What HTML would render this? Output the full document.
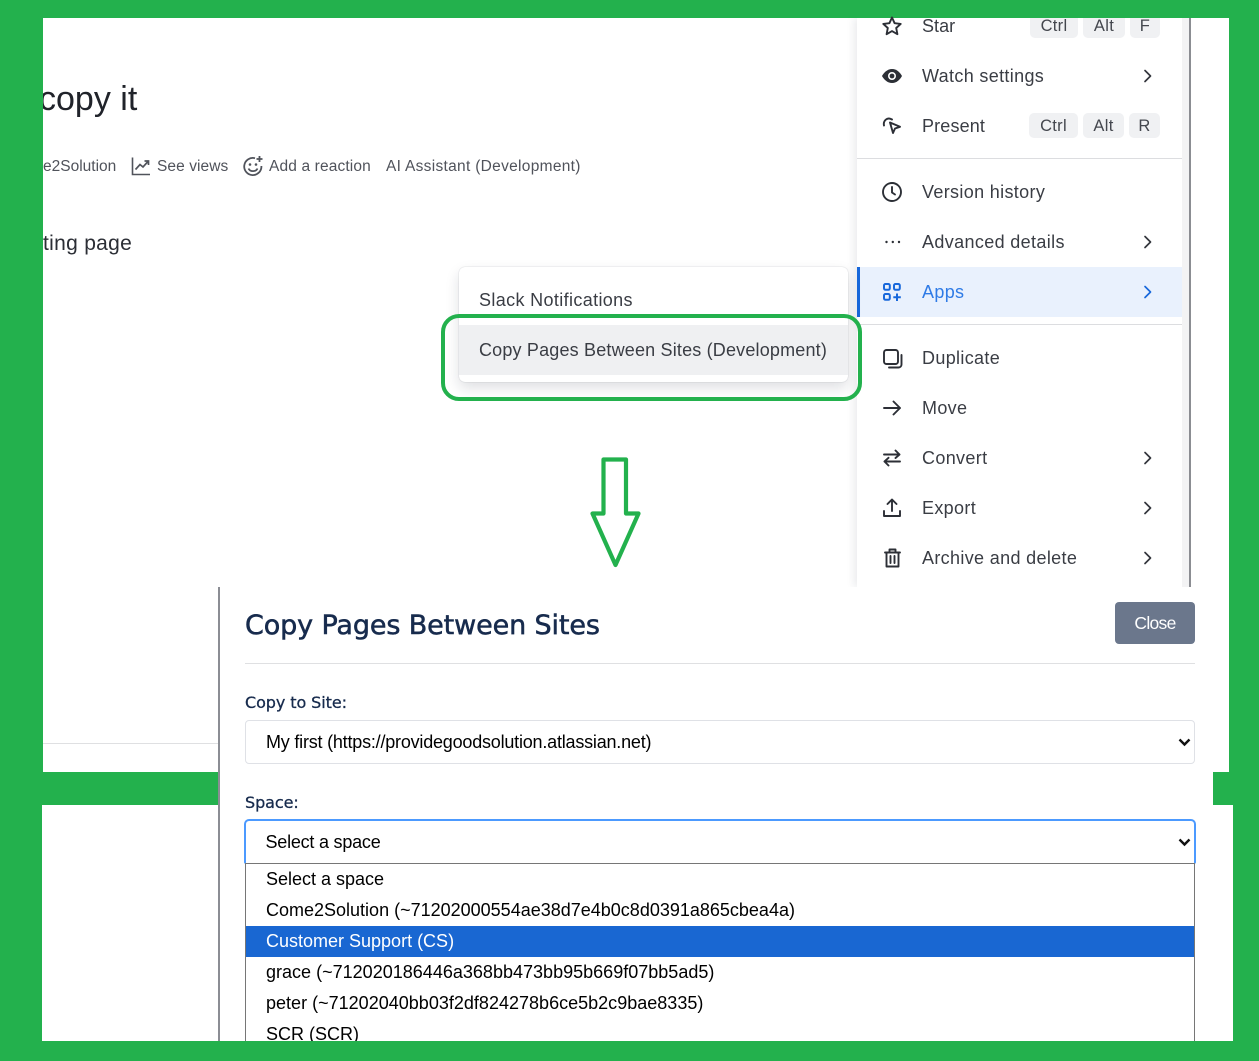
<!DOCTYPE html>
<html><head><meta charset="utf-8"><style>
html,body{margin:0;padding:0}
body{width:1259px;height:1061px;position:relative;overflow:hidden;background:#23b14d;font-family:"Liberation Sans",sans-serif}
div,span{position:absolute;white-space:nowrap}
svg{position:absolute;overflow:visible}
.m{left:922px;font-size:18px;line-height:24px;color:#3a3d44;letter-spacing:.34px}
.k{height:25px;line-height:27px;background:#f0f1f3;border-radius:5px;color:#44474e;font-size:16.5px;text-align:center;letter-spacing:.3px}
.o{left:266px;font-size:18px;line-height:31px;color:#000;letter-spacing:0}
.ic path,.ic circle,.ic rect{fill:none;stroke:#2c2f36;stroke-width:1.9;stroke-linecap:round;stroke-linejoin:round}
.ch{fill:none;stroke:#33363d;stroke-width:1.7;stroke-linecap:round;stroke-linejoin:round}
.sel{left:245px;width:950px;height:44px;box-sizing:border-box;background:#fff}
.t{font-size:18px;color:#000;line-height:44px;left:21px}
.l{font-family:'DejaVu Sans',sans-serif;font-size:16px;line-height:22px;color:#172b4d;letter-spacing:-.08px;-webkit-text-stroke:.3px #172b4d}
</style></head><body>

<div style="left:43px;top:18px;width:1186px;height:754px;background:#fff"></div>
<div style="left:42px;top:805px;width:1191px;height:236px;background:#fff"></div>

<div style="left:43px;top:18px;width:814px;height:569px;overflow:hidden">
<div style="left:-4px;top:58px;font-size:34px;line-height:46px;color:#20232a">copy it</div>
<div style="left:0;top:139px;font-size:15.5px;line-height:20px;color:#50535b">e2Solution</div>
<div style="left:114px;top:139px;font-size:15.5px;line-height:20px;color:#50535b;letter-spacing:.08px">See views</div>
<div style="left:226px;top:139px;font-size:15.5px;line-height:20px;color:#50535b;letter-spacing:.14px">Add a reaction</div>
<div style="left:343px;top:139px;font-size:15.5px;line-height:20px;color:#50535b;letter-spacing:.3px">AI Assistant (Development)</div>
<div style="left:0;top:213px;font-size:21px;line-height:26px;color:#2b2e35;letter-spacing:.3px">ting page</div>
</div>

<svg style="left:131px;top:156px" width="20" height="20" viewBox="0 0 20 20"><path d="M1.5 1.5V18.5H19" fill="none" stroke="#50535b" stroke-width="1.6"/><path d="M4.5 13.5L9 8.5L12 11L17 5.5M13.5 5H17.5V9" fill="none" stroke="#50535b" stroke-width="1.7"/></svg>
<svg style="left:242px;top:155px" width="22" height="22" viewBox="0 0 22 22"><path d="M13 3.2A8.6 8.6 0 1 0 19.4 11" fill="none" stroke="#50535b" stroke-width="1.8"/><circle cx="8" cy="9.5" r="1.3" fill="#50535b"/><circle cx="14" cy="9.5" r="1.3" fill="#50535b"/><path d="M6.5 13.5C8 17 14 17 15.5 13.5" fill="none" stroke="#50535b" stroke-width="1.7"/><path d="M17.5 1V7M14.5 4H20.5" stroke="#50535b" stroke-width="1.8"/></svg>

<!-- Menu -->
<div style="left:857px;top:18px;width:325px;height:569px;background:#fff;box-shadow:-3px 0 8px rgba(20,30,50,.09)"></div>
<div style="left:1182px;top:18px;width:7px;height:569px;background:#f3f3f4"></div>
<div style="left:1189px;top:18px;width:2px;height:569px;background:#8b8d92"></div>

<div style="left:857px;top:158px;width:325px;height:1px;background:#dcdde0"></div>
<div style="left:857px;top:324px;width:325px;height:1px;background:#dcdde0"></div>
<div style="left:857px;top:267px;width:325px;height:50px;background:#e9f1fd"></div>
<div style="left:857px;top:267px;width:3px;height:50px;background:#1868db"></div>

<div style="left:850px;top:0;width:409px;height:18px;background:#23b14d"></div>

<div class="m" style="top:14px;clip-path:inset(4px 0 0 0);letter-spacing:.05px">Star</div>
<div class="k" style="left:1030px;top:13px;width:48px;clip-path:inset(5px 0 0 0)">Ctrl</div>
<div class="k" style="left:1083px;top:13px;width:42px;clip-path:inset(5px 0 0 0)">Alt</div>
<div class="k" style="left:1130px;top:13px;width:30px;clip-path:inset(5px 0 0 0)">F</div>
<div class="m" style="top:64px">Watch settings</div>
<div class="m" style="top:114px;letter-spacing:.15px">Present</div>
<div class="k" style="left:1029px;top:113px;width:49px">Ctrl</div>
<div class="k" style="left:1083px;top:113px;width:41px">Alt</div>
<div class="k" style="left:1129px;top:113px;width:31px">R</div>
<div class="m" style="top:180px">Version history</div>
<div class="m" style="top:230px;letter-spacing:.36px">Advanced details</div>
<div class="m" style="top:280px;color:#2f7be6">Apps</div>
<div class="m" style="top:346px">Duplicate</div>
<div class="m" style="top:396px">Move</div>
<div class="m" style="top:446px">Convert</div>
<div class="m" style="top:496px">Export</div>
<div class="m" style="top:546px">Archive and delete</div>

<svg class="ic" style="left:882px;top:16px" width="20" height="20" viewBox="0 0 20 20"><path d="M10 1.5L12.6 7.2L18.7 7.9L14.2 12L15.4 18.2L10 15.1L4.6 18.2L5.8 12L1.3 7.9L7.4 7.2Z"/></svg>
<svg style="left:882px;top:69px" width="20" height="14" viewBox="0 0 20 14"><path d="M10 0C5 0 1.6 4 0 7C1.6 10 5 14 10 14C15 14 18.4 10 20 7C18.4 4 15 0 10 0Z" fill="#2c2f36"/><circle cx="10" cy="7" r="4" fill="#fff"/><circle cx="10" cy="7" r="2.4" fill="#2c2f36"/></svg>
<svg class="ic" style="left:882px;top:116px" width="20" height="20" viewBox="0 0 20 20"><path d="M8 6.5L18 10.8L13 12.5L11 17Z"/><path d="M2 9.5C1 5 5 .5 10 3.5"/></svg>
<svg class="ic" style="left:882px;top:182px" width="20" height="20" viewBox="0 0 20 20"><circle cx="10" cy="10" r="9"/><path d="M10 5V10.5L13 12.5"/></svg>
<svg style="left:885px;top:240px" width="16" height="4" viewBox="0 0 16 4"><circle cx="1.5" cy="2" r="1.2" fill="#2c2f36"/><circle cx="7.8" cy="2" r="1.2" fill="#2c2f36"/><circle cx="14" cy="2" r="1.2" fill="#2c2f36"/></svg>
<svg style="left:883px;top:283px" width="18" height="18" viewBox="0 0 18 18"><g fill="none" stroke="#1868db" stroke-width="2"><rect x="1" y="1" width="5.8" height="5.8" rx="1.5"/><rect x="11" y="1" width="5.8" height="5.8" rx="1.5"/><rect x="1" y="11" width="5.8" height="5.8" rx="1.5"/><path d="M14 10.5V18M10.3 14.2H17.8"/></g></svg>
<svg class="ic" style="left:883px;top:349px" width="20" height="20" viewBox="0 0 20 20"><rect x="1" y="1" width="14" height="14" rx="2.5"/><path d="M18.5 6V15.5A3 3 0 0 1 15.5 18.5H6"/></svg>
<svg class="ic" style="left:883px;top:399px" width="18" height="18" viewBox="0 0 18 18"><path d="M1 9H17M10.5 2.5L17 9L10.5 15.5"/></svg>
<svg class="ic" style="left:883px;top:449px" width="18" height="18" viewBox="0 0 18 18"><path d="M1 5.5H16.5M12.5 1.5L16.5 5.5L12.5 9"/><path d="M17 12.5H1.5M5.5 8.8L1.5 12.5L5.5 16.5"/></svg>
<svg class="ic" style="left:883px;top:498px" width="18" height="20" viewBox="0 0 18 20"><path d="M9 13V2M4.5 6L9 1.5L13.5 6"/><path d="M1 13V18H17V13"/></svg>
<svg class="ic" style="left:884px;top:548px" width="17" height="20" viewBox="0 0 17 20"><path d="M1 4.5H16M5.5 4V1.5H11.5V4M2.5 4.5V18.5H14.5V4.5M6.5 8V15M10.5 8V15"/></svg>

<svg style="left:1143px;top:69px" width="10" height="14"><path class="ch" d="M2 1.5L7.5 7L2 12.5"/></svg>
<svg style="left:1143px;top:235px" width="10" height="14"><path class="ch" d="M2 1.5L7.5 7L2 12.5"/></svg>
<svg style="left:1143px;top:285px" width="10" height="14"><path class="ch" style="stroke:#1868db" d="M2 1.5L7.5 7L2 12.5"/></svg>
<svg style="left:1143px;top:451px" width="10" height="14"><path class="ch" d="M2 1.5L7.5 7L2 12.5"/></svg>
<svg style="left:1143px;top:501px" width="10" height="14"><path class="ch" d="M2 1.5L7.5 7L2 12.5"/></svg>
<svg style="left:1143px;top:551px" width="10" height="14"><path class="ch" d="M2 1.5L7.5 7L2 12.5"/></svg>

<!-- Apps popup -->
<div style="left:459px;top:267px;width:389px;height:115px;background:#fff;border-radius:6px;box-shadow:0 6px 14px rgba(20,30,50,.14),0 0 1px rgba(20,30,50,.3)"></div>
<div style="left:459px;top:325px;width:389px;height:50px;background:#eff0f2"></div>
<div style="left:479px;top:288px;font-size:18px;line-height:24px;color:#3a3d44;letter-spacing:.36px">Slack Notifications</div>
<div style="left:479px;top:338px;font-size:18px;line-height:24px;color:#3a3d44;letter-spacing:.18px">Copy Pages Between Sites (Development)</div>

<div style="left:441px;top:314px;width:421px;height:87px;box-sizing:border-box;border:4px solid #23b14d;border-radius:18px"></div>
<svg style="left:590px;top:457px" width="52" height="112" viewBox="0 0 52 112"><path d="M13.5 2.5H36V56.5H48.5L25.5 108L2.5 56.5H13.5Z" fill="none" stroke="#23b14d" stroke-width="4.2" stroke-linejoin="round"/></svg>

<!-- lower background pieces -->
<div style="left:43px;top:743px;width:175px;height:1px;background:#dfe0e2"></div>
<div style="left:43px;top:772px;width:175px;height:33px;background:#23b14d"></div>

<!-- Dialog -->
<div style="left:218px;top:587px;width:2px;height:454px;background:#8b8d94"></div>
<div style="left:220px;top:587px;width:993px;height:454px;background:#fff"></div>
<div style="left:1213px;top:772px;width:16px;height:33px;background:#23b14d"></div>

<div style="left:245px;top:606px;line-height:40px;color:#172b4d;font-family:'DejaVu Sans',sans-serif;font-size:27px;letter-spacing:-.12px;-webkit-text-stroke:.55px #172b4d">Copy Pages Between Sites</div>
<div style="left:1115px;top:602px;width:80px;height:42px;background:#6b778c;border-radius:4px;color:#fff;font-size:17.5px;line-height:43px;text-align:center;letter-spacing:-.7px">Close</div>
<div style="left:245px;top:663px;width:950px;height:1px;background:#dfe0e2"></div>

<div class="l" style="left:245px;top:692px">Copy to Site:</div>
<div class="sel" style="top:720px;border:1px solid #dfe1e6;border-radius:4px"><span class="t" style="line-height:42px;left:20px;letter-spacing:-.21px">My first (https://providegoodsolution.atlassian.net)</span></div>
<svg style="left:1178px;top:738px" width="13" height="9"><path d="M1.5 1.5L6.5 6.5L11.5 1.5" fill="none" stroke="#111" stroke-width="2.4"/></svg>

<div class="l" style="left:245px;top:792px">Space:</div>
<div class="sel" style="left:244px;width:952px;top:819px;height:45px;border:2.5px solid #4c9aff;border-bottom-width:1px;border-radius:5px 5px 2px 2px"><span class="t" style="left:19.5px;line-height:42px;letter-spacing:-.22px">Select a space</span></div>
<svg style="left:1178px;top:838px" width="13" height="9"><path d="M1.5 1.5L6.5 6.5L11.5 1.5" fill="none" stroke="#111" stroke-width="2.4"/></svg>

<div style="left:245px;top:863px;width:950px;height:178px;box-sizing:border-box;border:solid #767676;border-width:1px 1px 0 1px;background:#fff"></div>
<div style="left:246px;top:926px;width:948px;height:31px;background:#1967d2"></div>
<div class="o" style="top:864px">Select a space</div>
<div class="o" style="top:895px">Come2Solution (~71202000554ae38d7e4b0c8d0391a865cbea4a)</div>
<div class="o" style="top:926px;color:#fff">Customer Support (CS)</div>
<div class="o" style="top:957px;letter-spacing:.01px">grace (~712020186446a368bb473bb95b669f07bb5ad5)</div>
<div class="o" style="top:988px;letter-spacing:.01px">peter (~71202040bb03f2df824278b6ce5b2c9bae8335)</div>
<div class="o" style="top:1019px;height:22px;overflow:hidden;line-height:31px">SCR (SCR)</div>

</body></html>
